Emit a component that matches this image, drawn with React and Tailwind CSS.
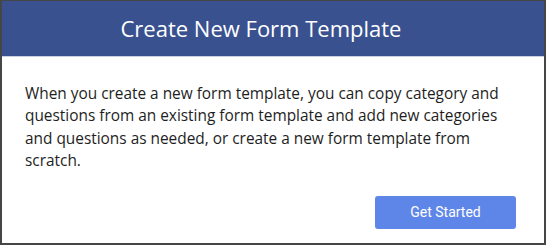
export default function App() {
  return (
    <div className="w-[546px] h-[245px] bg-white border-2 border-t border-[#464646] flex flex-col overflow-hidden">
      <div className="h-[56px] bg-[#3a5190] border-b border-[#c9d1e3] flex items-center justify-center pr-[24px] shrink-0">
        <h1 className="text-white text-[22px] leading-none pb-[2px]" style={{ fontFamily: '"Open Sans", sans-serif' }}>
          Create New Form Template
        </h1>
      </div>
      <div className="flex-1 flex flex-col pl-[23px] pr-[28px] pt-[26px]">
        <p className="text-[#1e1e1e] text-[15.4px] leading-[22.4px]" style={{ fontFamily: '"Open Sans", sans-serif' }}>
          When you create a new form template, you can copy category and questions from an existing form template and add new categories and questions as needed, or create a new form template from scratch.
        </p>
        <div className="flex justify-end mt-[23px]">
          <button className="w-[141px] h-[33px] rounded-[3px] bg-[#5e86e8] text-white text-[14px]" style={{ fontFamily: 'Roboto, sans-serif' }}>
            Get Started
          </button>
        </div>
      </div>
    </div>
  );
}
